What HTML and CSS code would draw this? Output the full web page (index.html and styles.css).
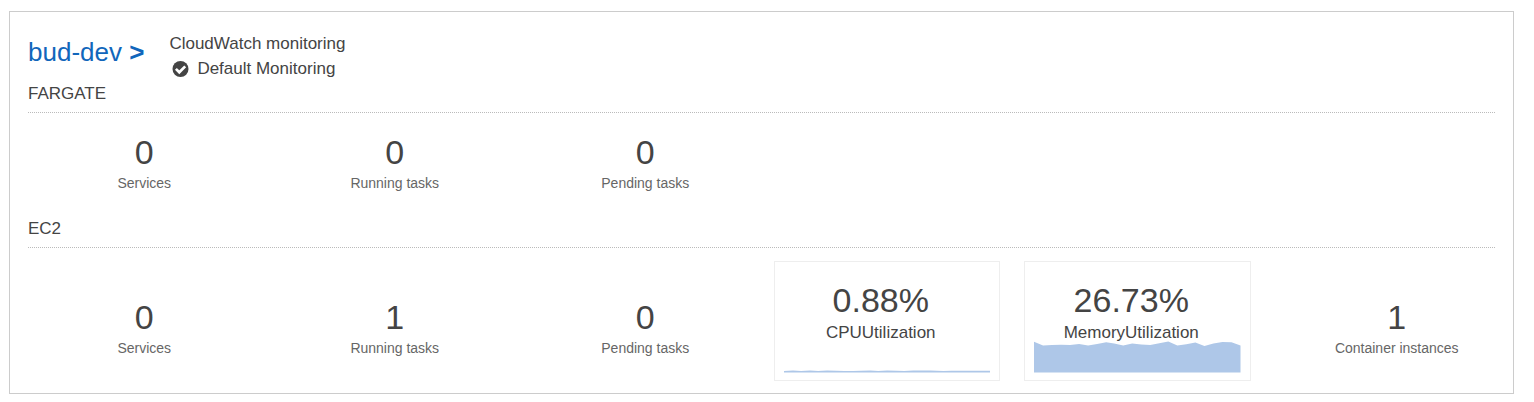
FILE: index.html
```html
<!DOCTYPE html>
<html lang="en">
<head>
<meta charset="utf-8">
<title>Clusters</title>
<link rel="stylesheet" href="styles.css">
</head>
<body>
<main class="cluster">
  <header class="cluster-header">
    <h1 class="cluster-name"><a href="#bud-dev">bud-dev <b>&gt;</b></a></h1>
    <div class="monitoring">
      <div>CloudWatch monitoring</div>
      <div class="monitoring-status">
        <svg class="check" viewBox="0 0 17 17" aria-hidden="true">
          <circle cx="8.5" cy="9" r="8" fill="#444"/>
          <path d="M3.9 8.9 7.3 12.3 13.2 6.4" fill="none" stroke="#fff" stroke-width="2.7"/>
        </svg>
        <span>Default Monitoring</span>
      </div>
    </div>
  </header>

  <section>
    <h2 class="section-title">FARGATE</h2>
    <div class="metrics">
      <div class="metric"><div class="value">0</div><div class="label">Services</div></div>
      <div class="metric"><div class="value">0</div><div class="label">Running tasks</div></div>
      <div class="metric"><div class="value">0</div><div class="label">Pending tasks</div></div>
    </div>
  </section>

  <section>
    <h2 class="section-title">EC2</h2>
    <div class="metrics metrics-charts">
      <div class="metric"><div class="value">0</div><div class="label">Services</div></div>
      <div class="metric"><div class="value">1</div><div class="label">Running tasks</div></div>
      <div class="metric"><div class="value">0</div><div class="label">Pending tasks</div></div>
      <div class="chart-card">
        <div class="chart-text">
          <div class="value">0.88%</div>
          <div class="chart-label">CPUUtilization</div>
        </div>
        <svg class="chart" viewBox="0 0 206 32" preserveAspectRatio="none" aria-hidden="true">
          <path fill="#aec7e8" d="M0 30 9 29.6 17 30 26 29.6 34 30 43 29.6 52 29.7 60 30.1 69 30.1 77 29.7 86 29.6 94 30 103 29.6 112 29.7 120 30 129 29.6 146 29.6 159 30.1 167 29.7 206 29.8V31.6H0Z"/>
        </svg>
      </div>
      <div class="chart-card">
        <div class="chart-text">
          <div class="value">26.73%</div>
          <div class="chart-label">MemoryUtilization</div>
        </div>
        <svg class="chart" viewBox="0 0 206 32" preserveAspectRatio="none" aria-hidden="true">
          <path fill="#aec7e8" d="M0 .8 9 4.4 18 4 27 3.7 36 4 45 3 54 4.6 63 3 72 1.2 80 2.4 89 4.6 98 2.4 107 3.6 116 3.9 125 2.2 134 .4 143 4.4 152 3.2 161 1.4 170 5 179 2.4 188 1 197 1.2 206 4.6V31.6H0Z"/>
        </svg>
      </div>
      <div class="metric"><div class="value">1</div><div class="label">Container instances</div></div>
    </div>
  </section>
</main>
</body>
</html>
```
FILE: styles.css
```css
* {
  box-sizing: border-box;
}

body {
  margin: 0;
  padding: 11px 20px 8px 9px;
  background: #fff;
  color: #444;
  font: 17px/25px "Liberation Sans", Arial, sans-serif;
}

.cluster {
  border: 1px solid #ccc;
  padding-bottom: 12px;
}

.cluster-header {
  display: flex;
  align-items: center;
  gap: 25px;
  padding: 19px 18px 0;
}

.cluster-name {
  margin: 0 0 8px;
  font-size: 26px;
  font-weight: normal;
  line-height: 30px;
}

.cluster-name a {
  color: #1166bb;
  text-decoration: none;
}

.monitoring-status {
  display: flex;
  align-items: center;
  gap: 8px;
  padding-left: 3px;
}

.check {
  width: 17px;
  height: 17px;
}

.section-title {
  margin: 0 18px;
  padding-bottom: 6px;
  border-bottom: 1px dotted #bbb;
  font-size: 17px;
  font-weight: normal;
}

.metrics {
  display: grid;
  grid-template-columns: repeat(6, 1fr);
  align-items: center;
  padding: 20px 0 21px;
  text-align: center;
}

.metrics-charts {
  padding: 13px 0 0;
}

.metric {
  padding-left: 18px;
}

.metrics-charts .metric {
  padding-top: 16px;
}

.value {
  font-size: 34px;
  line-height: 38px;
}

.label {
  color: #666;
  font-size: 14px;
  line-height: 24px;
}

.chart-card {
  margin: 0 12px;
  padding: 19px 9px 7px;
  border: 1px solid #eee;
}

.chart-text {
  padding-right: 12px;
}

.chart-label {
  line-height: 28px;
}

.chart {
  display: block;
  width: 100%;
  height: 32px;
  margin-top: -6px;
}
```
